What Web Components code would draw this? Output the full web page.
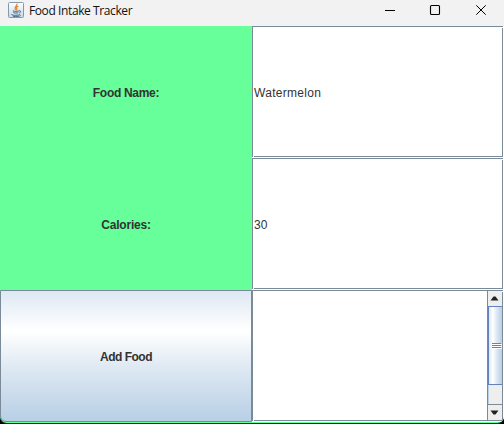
<!DOCTYPE html>
<html lang="en"><head><meta charset="utf-8"><title>Food Intake Tracker</title>
<style>html,body{margin:0;width:504px;height:424px;overflow:hidden;background:#000}
.name{letter-spacing:-.3px}.cal{letter-spacing:-.2px}.add{letter-spacing:-.5px}.melon{letter-spacing:.3px}</style></head>
<body>
<app-window heading="Food Intake Tracker">
<metal-label class="name">Food Name:</metal-label><metal-field class="melon">Watermelon</metal-field>
<metal-label class="cal">Calories:</metal-label><metal-field>30</metal-field>
<metal-button class="add">Add Food</metal-button><metal-scroll></metal-scroll>
</app-window>
<script>
function define(name, html){
  customElements.define(name, class extends HTMLElement{
    constructor(){
      super();
      this.attachShadow({mode:'open'}).innerHTML=html;
      const h=this.shadowRoot.querySelector('.heading');
      if(h) h.textContent=this.getAttribute('heading');
    }
  });
}
define('app-window',`<style>
:host{display:flex;flex-direction:column;box-sizing:border-box;width:504px;height:424px;overflow:hidden;background:#66ff99;border-bottom:1px solid #123021;border-radius:0 0 7px 7px;font:12px "Liberation Sans",Arial,sans-serif;color:#333}
header{height:26px;flex:none;display:flex;align-items:flex-start;background:#f2f2f2;color:#111}
.logo{margin:2px 0 0 8px;flex:none}
.heading{font:12px/16px "Open Sans","Noto Sans",sans-serif;margin:3px 0 0 5px;width:104px;white-space:nowrap;letter-spacing:-.4px}
.controls{margin-left:auto;flex:none}
main{display:grid;grid-template-columns:252px 252px;grid-template-rows:repeat(3,132px)}
</style><header>
<svg class="logo" width="16" height="16" viewBox="0 0 16 16" fill="none"><defs><linearGradient id="g" x2="0" y2="1"><stop stop-color="#fff"/><stop offset="1" stop-color="#c9d8e3"/></linearGradient></defs><rect x=".5" y=".5" width="15" height="15" rx="1" fill="url(#g)" stroke="#7f9aae"/><path d="M8.8 1.6C10 4 5.2 4.7 7.5 8.2M10.4 4.2C7.4 5.4 8.6 6 8.9 6.7c.3.7-.3 1.2-.7 1.7" stroke="#e8862e" stroke-width="1.3"/><path d="M4.8 8.8c1.5.8 4.5.8 6.2.1M5.3 10.5c1.5.7 3.7.7 5 .1M11 8.8c2.3-.5 2 1.6.2 2.4M3.7 12.2c-1.5 1.4 7.5 1.5 8.2.1M5 14.3c3 .4 6.8.2 7.6-.9" stroke="#41698e"/></svg>
<span class="heading"></span>
<svg class="controls" width="124" height="26" fill="none"><path d="M5 10.5h10" stroke="#000"/><rect x="50.5" y="5.5" width="9" height="9" rx="1" stroke="#000" stroke-width="1.1"/><path d="M96.3 5.3l9.4 9.4M105.7 5.3l-9.4 9.4" stroke="#000"/></svg>
</header><main><slot></slot></main>`);
define('metal-label',`<style>:host{display:flex;align-items:center;justify-content:center;font-weight:bold;line-height:14px;padding-top:1px}</style><slot></slot>`);
const frame=`background:
linear-gradient(#7a8a99,#7a8a99) 0 0/251px 1px no-repeat,
linear-gradient(#7a8a99,#7a8a99) 0 0/1px 131px no-repeat,
linear-gradient(#7a8a99,#7a8a99) 2px 130px/249px 1px no-repeat,
linear-gradient(#7a8a99,#7a8a99) 250px 2px/1px 129px no-repeat,#fff`;
define('metal-field',`<style>:host{display:flex;align-items:center;box-sizing:border-box;padding:1px 0 0 2px;line-height:14px;${frame}}</style><slot></slot>`);
define('metal-button',`<style>:host{display:flex;align-items:center;justify-content:center;box-sizing:border-box;border:1px solid #7a8a99;border-bottom-left-radius:6px;font-weight:bold;line-height:14px;padding-top:1px;background:linear-gradient(#dde8f3 0,#fff 30%,#fff 31%,#dde8f3 60%,#b8cfe5)}</style><slot></slot>`);
define('metal-scroll',`<style>:host{display:flex;justify-content:flex-end;box-sizing:border-box;padding:1px 2px 2px 1px;${frame}}
.bar{box-sizing:border-box;width:15px;height:129px;display:flex;flex-direction:column;border-left:1px solid #7a8a99;background:#eee}
.arrow{flex:none;height:15px;display:grid;place-items:center}
.thumb{box-sizing:border-box;height:79px;border:1px solid #6382bf;border-width:1px 0 1px 1px;background:linear-gradient(90deg,#dde8f3,#fff 30%,#dde8f3 60%,#b8cfe5);display:grid;place-items:center}
.track{flex:1;border-left:1px solid #b8cfe5}
.down{border-top:1px solid #7a8a99}
svg{display:block}</style><div class="bar">
<div class="arrow"><svg width="14" height="15"><path d="M2.5 9.5h8L7.5 5.5h-2z" fill="#222"/></svg></div>
<div class="thumb"><svg width="12" height="7"><path d="M2 1.5h9M2 3.5h9M2 5.5h9" stroke="#6382bf"/><path d="M3 2.5h9M3 4.5h9M3 6.5h9" stroke="#fff"/></svg></div>
<div class="track"></div>
<div class="arrow down"><svg width="14" height="15"><path d="M2.5 5.5h8L7.5 9.5h-2z" fill="#222"/></svg></div></div>`);
</script>
</body></html>
